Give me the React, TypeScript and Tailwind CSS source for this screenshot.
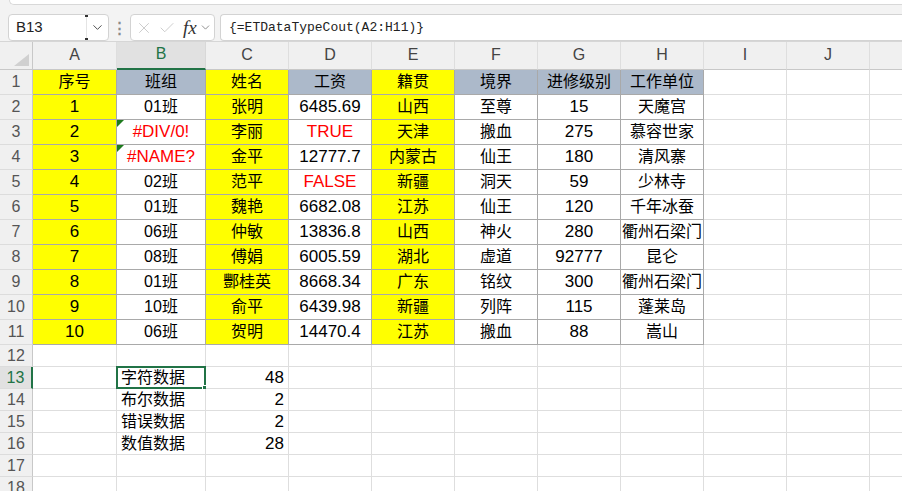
import { ChevronDown, X, Check } from "lucide-react";

type Fill = "Y" | "G" | "W";

const colKeys = ["A", "B", "C", "D", "E", "F", "G", "H", "I", "J", "K"];

const header = ["序号", "班组", "姓名", "工资", "籍贯", "境界", "进修级别", "工作单位"];

const rows: string[][] = [
  ["1", "01班", "张明", "6485.69", "山西", "至尊", "15", "天魔宫"],
  ["2", "#DIV/0!", "李丽", "TRUE", "天津", "搬血", "275", "慕容世家"],
  ["3", "#NAME?", "金平", "12777.7", "内蒙古", "仙王", "180", "清风寨"],
  ["4", "02班", "范平", "FALSE", "新疆", "洞天", "59", "少林寺"],
  ["5", "01班", "魏艳", "6682.08", "江苏", "仙王", "120", "千年冰蚕"],
  ["6", "06班", "仲敏", "13836.8", "山西", "神火", "280", "衢州石梁门"],
  ["7", "08班", "傅娟", "6005.59", "湖北", "虚道", "92777", "昆仑"],
  ["8", "01班", "酆桂英", "8668.34", "广东", "铭纹", "300", "衢州石梁门"],
  ["9", "10班", "俞平", "6439.98", "新疆", "列阵", "115", "蓬莱岛"],
  ["10", "06班", "贺明", "14470.4", "江苏", "搬血", "88", "嵩山"],
];

const summary: [string, string][] = [
  ["字符数据", "48"],
  ["布尔数据", "2"],
  ["错误数据", "2"],
  ["数值数据", "28"],
];

const redCells = new Set(["B3", "B4", "D3", "D5"]);
const flagCells = new Set(["B3", "B4"]);

const headerFill: Fill[] = ["Y", "G", "Y", "G", "Y", "G", "G", "G"];
const bodyFill: Fill[] = ["Y", "W", "Y", "W", "Y", "W", "W", "W"];

const fillClass: Record<Fill, string> = {
  Y: "bg-[#ffff00]",
  G: "bg-[#acb9ca]",
  W: "bg-white",
};

const isAscii = (s: string) => /^[\x00-\x7f]*$/.test(s);

const font = { fontFamily: '"Liberation Sans", "Noto Sans CJK SC", sans-serif' };

function Toolbar() {
  return (
    <div className="relative h-[42px] bg-[#f3f3f3] border-b border-[#d6d6d6]">
      <div className="ml-[9px] h-[5px] bg-white border-b border-l border-[#d8d8d8] rounded-bl-[6px]" />
      <div className="flex items-center h-[27px] mt-[9px]">
        <div className="ml-[8px] w-[101px] h-full bg-white border border-[#d3d3d3] rounded-[4px] flex items-center">
          <span className="pl-[7px] text-[15px] text-[#222] flex-1" style={font}>
            B13
          </span>
          <div className="relative w-px h-full bg-[#e4e4e4]">
            <span className="absolute top-0 -left-px w-[3px] h-[2px] bg-[#333]" />
            <span className="absolute bottom-0 -left-px w-[3px] h-[2px] bg-[#333]" />
          </div>
          <ChevronDown size={15} strokeWidth={1.5} className="mx-[3px] text-[#444]" />
        </div>
        <div className="w-[21px] flex justify-center text-[#8a8a8a] text-[15px] font-bold leading-none">⋮</div>
        <div className="w-[85px] h-full bg-white border border-[#d3d3d3] rounded-[4px] flex items-center">
          <X size={18} strokeWidth={1.1} className="ml-[4px] text-[#c2c2c2]" />
          <Check size={18} strokeWidth={1.1} className="ml-[5px] text-[#c2c2c2]" />
          <span
            className="ml-[7px] text-[19px] italic text-[#333] leading-none"
            style={{ fontFamily: '"Liberation Serif", serif' }}
          >
            fx
          </span>
          <ChevronDown size={13} strokeWidth={1.5} className="ml-[2px] text-[#777]" />
        </div>
        <div className="ml-[5px] flex-1 h-full bg-white border border-r-0 border-[#d3d3d3] rounded-l-[4px] flex items-center">
          <span
            className="pl-[8px] text-[13px] text-[#222]"
            style={{ fontFamily: '"Liberation Mono", monospace' }}
          >
            {"{=ETDataTypeCout(A2:H11)}"}
          </span>
        </div>
      </div>
    </div>
  );
}

function Cell({
  id,
  text,
  fill,
  dark,
  align = "center",
}: {
  id: string;
  text: string;
  fill: Fill;
  dark: boolean;
  align?: "center" | "left" | "right";
}) {
  const red = redCells.has(id);
  const size = isAscii(text) ? "text-[17px]" : "text-[16px]";
  const just =
    align === "center" ? "justify-center" : align === "left" ? "justify-start pl-[4px]" : "justify-end pr-[4px]";
  return (
    <div
      className={`relative flex items-center whitespace-nowrap overflow-visible border-r border-b ${
        dark ? "border-[#a9a9a9]" : "border-[#dedede]"
      } ${fillClass[fill]} ${just} ${size} ${red ? "text-[#ff0000]" : "text-black"}`}
      style={font}
    >
      {flagCells.has(id) && (
        <svg className="absolute left-0 top-0" width="7" height="7" viewBox="0 0 7 7">
          <polygon points="0,0 7,0 0,7" fill="#1e7b1e" />
        </svg>
      )}
      {id === "B13" && (
        <>
          <div className="absolute -left-px -top-px -right-px -bottom-px border-2 border-[#217346]" />
          <div className="absolute -right-[3px] -bottom-[3px] w-[6px] h-[6px] bg-[#217346] border border-white" />
        </>
      )}
      {text}
    </div>
  );
}

export default function App() {
  const sheetRows = 18;
  return (
    <div className="w-[902px] h-[491px] overflow-hidden bg-white">
      <Toolbar />
      <div className="grid grid-cols-[33px_84px_89px_83px_83px_83px_83px_83px_83px_83px_83px_83px] grid-rows-[28px_repeat(11,25px)_repeat(7,22px)] w-[952px]">
        {/* corner */}
        <div className="relative bg-[#f0f0f0] border-r border-b border-[#c8c8c8]">
          <svg className="absolute right-[3px] bottom-[3px]" width="15" height="12" viewBox="0 0 15 12">
            <polygon points="15,0 15,12 0,12" fill="#d0d0d0" />
          </svg>
        </div>
        {colKeys.map((k) => (
          <div
            key={k}
            className={`flex items-end justify-center pb-[2px] text-[16px] ${
              k === "B"
                ? "bg-[#e1e1e1] text-[#217346] border-b-2 border-b-[#217346] border-r border-r-[#d8d8d8]"
                : "bg-[#f0f0f0] text-[#444] border-b border-b-[#c8c8c8] border-r border-r-[#dedede]"
            }`}
            style={font}
          >
            {k}
          </div>
        ))}
        {Array.from({ length: sheetRows }, (_, i) => {
          const r = i + 1;
          const sel = r === 13;
          const cells = colKeys.map((k, c) => {
            const id = `${k}${r}`;
            let text = "";
            let fill: Fill = "W";
            let align: "center" | "left" | "right" = "center";
            const inData = r <= 11 && c < 8;
            if (r === 1 && c < 8) {
              text = header[c];
              fill = headerFill[c];
            } else if (r >= 2 && r <= 11 && c < 8) {
              text = rows[r - 2][c];
              fill = bodyFill[c];
            } else if (r >= 13 && r <= 16) {
              if (k === "B") {
                text = summary[r - 13][0];
                align = "left";
              } else if (k === "C") {
                text = summary[r - 13][1];
                align = "right";
              }
            }
            return <Cell key={id} id={id} text={text} fill={fill} dark={inData} align={align} />;
          });
          return [
            <div
              key={`h${r}`}
              className={`flex items-center justify-center text-[16px] border-b border-b-[#dcdcdc] ${
                sel
                  ? "bg-[#e1e1e1] text-[#217346] border-r-2 border-r-[#217346]"
                  : "bg-[#f0f0f0] text-[#555] border-r border-r-[#c8c8c8]"
              }`}
              style={font}
            >
              {r}
            </div>,
            ...cells,
          ];
        })}
      </div>
    </div>
  );
}
